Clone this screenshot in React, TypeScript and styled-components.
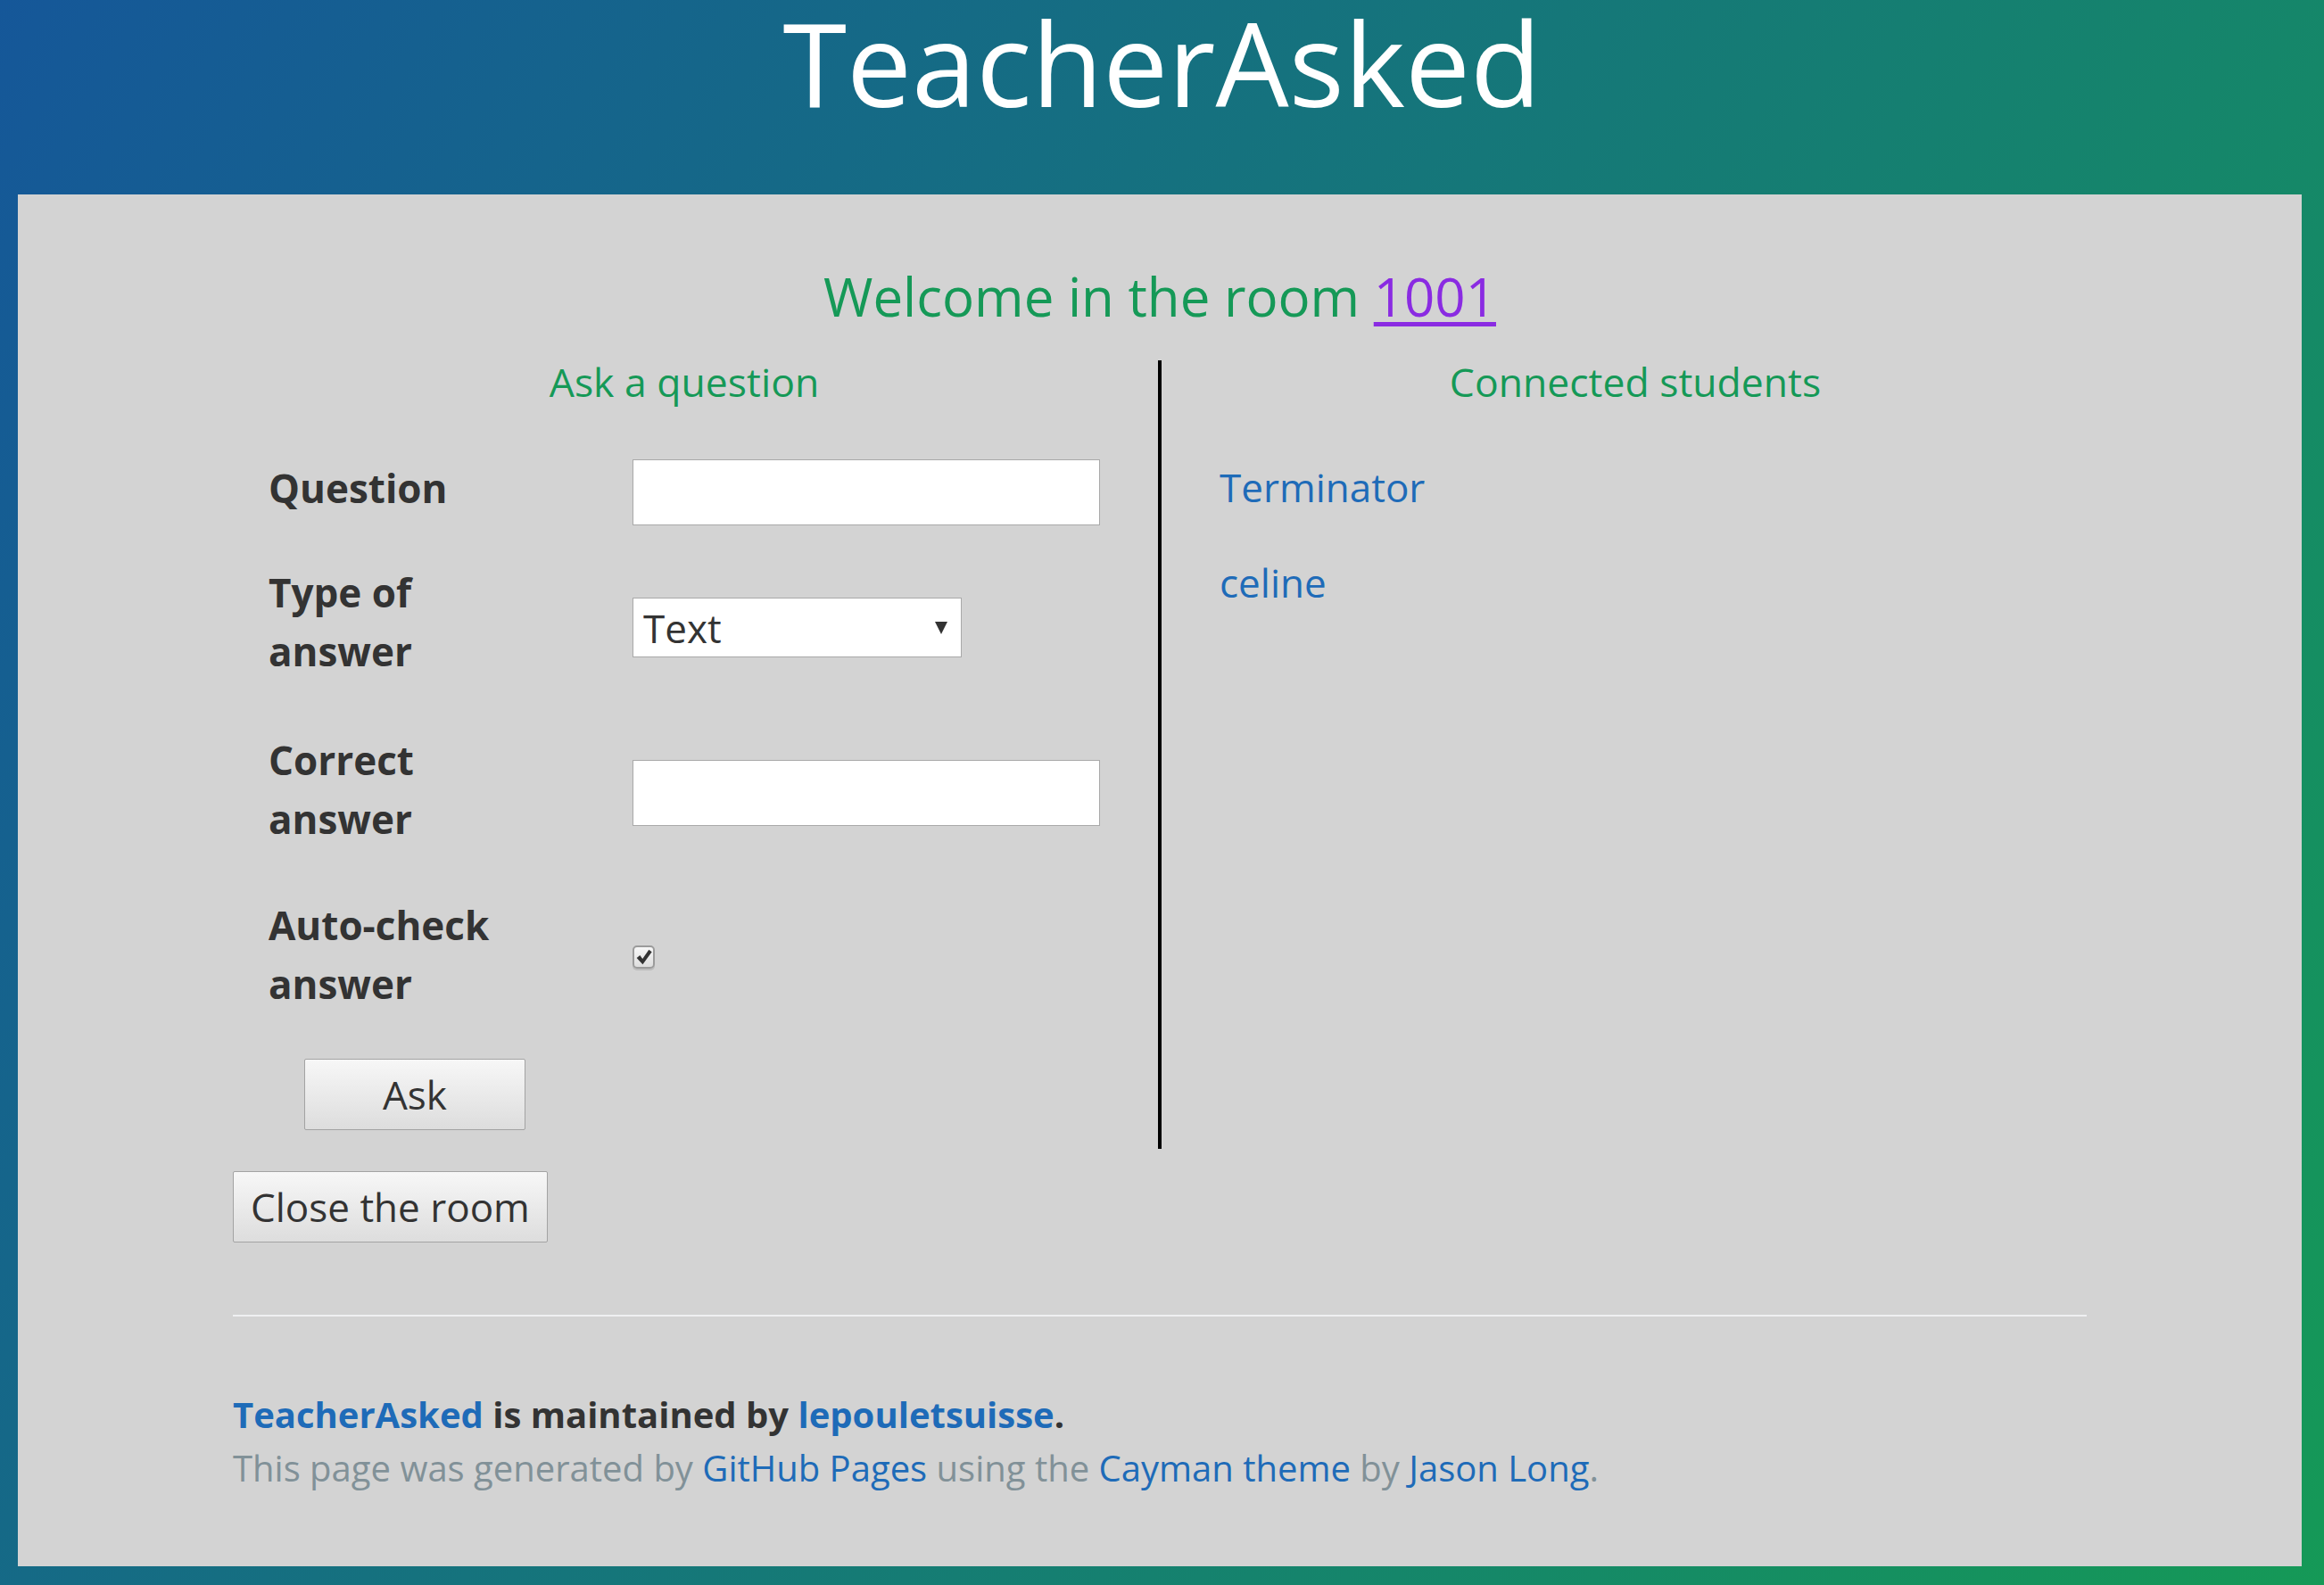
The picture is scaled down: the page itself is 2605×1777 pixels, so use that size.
import styled, { createGlobalStyle } from 'styled-components'

/*---> Component <---*/
export default function App() {
  return (
    <Page>
      <GlobalStyle />
      <Header>
        <ProjectName>TeacherAsked</ProjectName>
      </Header>
      <MainContent>
        <Welcome>
          Welcome in the room <RoomLink href="#">1001</RoomLink>
        </Welcome>
        <Columns>
          <Column>
            <SectionTitle>Ask a question</SectionTitle>
            <Form>
              <FormRow $gap={0}>
                <Label>Question</Label>
                <Control $top={1}>
                  <TextInput type="text" />
                </Control>
              </FormRow>
              <FormRow $gap={42}>
                <Label>Type of answer</Label>
                <Control $top={39}>
                  <SelectWrap>
                    <Select defaultValue="text">
                      <option value="text">Text</option>
                      <option value="number">Number</option>
                    </Select>
                    <SelectArrow width="14" height="14" viewBox="0 0 14 14">
                      <path d="M0 0 L14 0 L7 14 Z" fill="#333" />
                    </SelectArrow>
                  </SelectWrap>
                </Control>
              </FormRow>
              <FormRow $gap={56}>
                <Label>Correct answer</Label>
                <Control $top={33}>
                  <TextInput type="text" />
                </Control>
              </FormRow>
              <FormRow $gap={53}>
                <Label>Auto-check answer</Label>
                <Control $top={56}>
                  <CheckBox>
                    <svg width="20" height="20" viewBox="0 0 18 18">
                      <path
                        d="M1.5 10 L4.8 7.3 L7.4 10.8 L13.8 1.5 L16.8 3.8 L7.6 16.5 Z"
                        fill="#333"
                      />
                    </svg>
                  </CheckBox>
                </Control>
              </FormRow>
              <AskRow>
                <GreyButton $width={248}>Ask</GreyButton>
              </AskRow>
            </Form>
          </Column>
          <Divider />
          <Column>
            <SectionTitle>Connected students</SectionTitle>
            <StudentList>
              <Student href="#">Terminator</Student>
              <Student href="#">celine</Student>
            </StudentList>
          </Column>
        </Columns>
        <CloseRow>
          <GreyButton>Close the room</GreyButton>
        </CloseRow>
        <Footer>
          <FooterOwner>
            <FooterLink href="#">TeacherAsked</FooterLink> is maintained by{' '}
            <FooterLink href="#">lepouletsuisse</FooterLink>.
          </FooterOwner>
          <FooterCredits>
            This page was generated by <FooterLink href="#">GitHub Pages</FooterLink>{' '}
            using the <FooterLink href="#">Cayman theme</FooterLink> by{' '}
            <FooterLink href="#">Jason Long</FooterLink>.
          </FooterCredits>
        </Footer>
      </MainContent>
    </Page>
  )
}

/*---> Styles <---*/
const GlobalStyle = createGlobalStyle`
  html, body {
    margin: 0;
    padding: 0;
  }
  body {
    font-family: 'Open Sans', 'Helvetica Neue', Helvetica, Arial, sans-serif;
    color: #333;
  }
  * {
    box-sizing: border-box;
  }
`

const Page = styled.div`
  width: 2605px;
  min-height: 1777px;
  background-color: #159957;
  background-image: linear-gradient(120deg, #155799, #159957);
  overflow: hidden;
`

const Header = styled.header`
  height: 218px;
  padding-top: 20px;
  text-align: center;
`

const ProjectName = styled.h1`
  margin: 0;
  font-size: 130px;
  line-height: 100px;
  font-weight: 400;
  color: #fff;
`

const MainContent = styled.main`
  width: 2560px;
  margin-left: 20px;
  padding: 84px 241px 80px;
  background: #d3d3d3;
`

const Welcome = styled.h2`
  margin: 0;
  font-size: 60px;
  line-height: 60px;
  font-weight: 400;
  color: #159957;
  text-align: center;
`

const RoomLink = styled.a`
  color: #8a2be2;
  text-decoration: underline;
  text-decoration-thickness: 5px;
  text-underline-offset: 6px;
`

const Columns = styled.div`
  display: flex;
  margin-top: 42px;
`

const Column = styled.section`
  width: 1012px;
`

const Divider = styled.div`
  width: 4px;
  margin: 0 25px;
  background: #000;
`

const SectionTitle = styled.h3`
  margin: 2px 0 0;
  font-size: 44.5px;
  line-height: 44px;
  font-weight: 400;
  color: #159957;
  text-align: center;
`

const Form = styled.div`
  margin-top: 64px;
  padding-left: 40px;
  padding-bottom: 21px;
`

const FormRow = styled.div<{ $gap: number }>`
  display: grid;
  grid-template-columns: 408px 1fr;
  align-items: start;
  margin-top: ${(p) => p.$gap}px;
`

const Control = styled.div<{ $top: number }>`
  margin-top: ${(p) => p.$top}px;
`

const Label = styled.label`
  max-width: 280px;
  font-size: 44px;
  line-height: 66px;
  font-weight: 700;
  color: #333;
`

const TextInput = styled.input`
  display: block;
  width: 524px;
  height: 74px;
  border: 1px solid #a9a9a9;
  border-radius: 0;
  background: #fff;
  font-family: inherit;
  font-size: 44px;
  padding: 0 10px;
  outline: none;
`

const SelectWrap = styled.div`
  position: relative;
  width: 369px;
  height: 67px;
`

const Select = styled.select`
  appearance: none;
  display: block;
  width: 100%;
  height: 100%;
  border: 1px solid #a9a9a9;
  border-radius: 0;
  background: #fff;
  color: #333;
  font-family: inherit;
  font-size: 44px;
  padding: 0 11px;
  outline: none;
`

const SelectArrow = styled.svg`
  position: absolute;
  right: 16px;
  top: 27px;
  pointer-events: none;
`

const CheckBox = styled.span`
  display: flex;
  align-items: center;
  justify-content: center;
  width: 25px;
  height: 26px;
  border: 2px solid #9b9b9b;
  border-radius: 5px;
  background: linear-gradient(#f7f7f7, #dedede);
  box-shadow: 0 2px 0 #bbb;
`

const AskRow = styled.div`
  padding: 51px 0 0 40px;
`

const GreyButton = styled.button<{ $width?: number }>`
  width: ${(p) => (p.$width ? `${p.$width}px` : 'auto')};
  height: 80px;
  padding: 0 19px;
  border: 1px solid #a3a3a3;
  border-radius: 2px;
  background: linear-gradient(#f7f7f7, #dddddd);
  color: #333;
  font-family: inherit;
  font-size: 44px;
  line-height: 1;
  cursor: pointer;
`

const StudentList = styled.div`
  display: flex;
  flex-direction: column;
  gap: 41px;
  margin-top: 63px;
  padding-left: 40px;
`

const Student = styled.a`
  font-size: 44px;
  line-height: 66px;
  color: #1e6bb8;
  text-decoration: none;
`

const CloseRow = styled.div`
  margin-top: 25px;
`

const Footer = styled.footer`
  margin-top: 81px;
  padding-top: 80px;
  border-top: 2px solid #eff0f1;
  font-size: 40px;
  line-height: 60px;
`

const FooterOwner = styled.div`
  font-weight: 700;
  color: #333;
`

const FooterCredits = styled.div`
  color: #819198;
`

const FooterLink = styled.a`
  color: #1e6bb8;
  text-decoration: none;
`
